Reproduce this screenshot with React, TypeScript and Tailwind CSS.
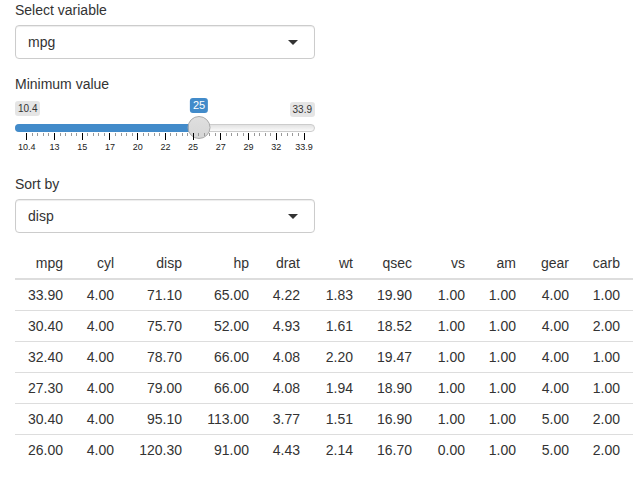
import React from 'react';

const columns = ['mpg', 'cyl', 'disp', 'hp', 'drat', 'wt', 'qsec', 'vs', 'am', 'gear', 'carb'];

const colWidths = ['w-[56px]', 'w-[51px]', 'w-[68px]', 'w-[67px]', 'w-[51px]', 'w-[53px]', 'w-[59px]', 'w-[53px]', 'w-[51px]', 'w-[53px]', 'w-[56px]'];

const rows = [
    ['33.90', '4.00', '71.10', '65.00', '4.22', '1.83', '19.90', '1.00', '1.00', '4.00', '1.00'],
    ['30.40', '4.00', '75.70', '52.00', '4.93', '1.61', '18.52', '1.00', '1.00', '4.00', '2.00'],
    ['32.40', '4.00', '78.70', '66.00', '4.08', '2.20', '19.47', '1.00', '1.00', '4.00', '1.00'],
    ['27.30', '4.00', '79.00', '66.00', '4.08', '1.94', '18.90', '1.00', '1.00', '4.00', '1.00'],
    ['30.40', '4.00', '95.10', '113.00', '3.77', '1.51', '16.90', '1.00', '1.00', '5.00', '2.00'],
    ['26.00', '4.00', '120.30', '91.00', '4.43', '2.14', '16.70', '0.00', '1.00', '5.00', '2.00'],
];

const gridLabels = ['10.4', '13', '15', '17', '20', '22', '25', '27', '29', '32', '33.9'];

// positions relative to the slider box (left edge at x=15)
const gridStart = 11.3;
const gridStep = 27.72;
const handleX = 183.5;

function SelectBox({ value }: { value: string }) {
    return (
        <div className="flex items-center justify-between h-[34px] w-[300px] border border-[#ccc] rounded-[4px] bg-white pl-[12px] pr-[16px] shadow-[inset_0_1px_1px_rgba(0,0,0,0.075)]">
            <span className="text-[14px] leading-5 text-[#333]">{value}</span>
            <span className="w-0 h-0 border-l-[5px] border-r-[5px] border-t-[5px] border-l-transparent border-r-transparent border-t-[#333]"></span>
        </div>
    )
}

function Slider() {
    const ticks = []
    for (let i = 0; i < 10; i++) {
        for (let j = 1; j < 5; j++) {
            ticks.push(gridStart + i * gridStep + (j * gridStep) / 5)
        }
    }

    return (
        <div className="flex flex-col w-[300px]">
            {/* min / max labels, value bubble above the handle */}
            <div className="relative flex justify-between items-start h-[25px] pt-[2px]">
                <span className="px-[3px] py-[1px] rounded-[3px] bg-black/10 text-[10px] leading-[13px] text-[#333]">10.4</span>
                <span className="mt-[1px] px-[3px] py-[1px] rounded-[3px] bg-black/10 text-[10px] leading-[13px] text-[#333]">33.9</span>
                <span className="absolute top-[-1px] -translate-x-1/2 px-[3px] py-[1px] rounded-[3px] bg-[#428bca] text-white text-[11px] leading-[13px]"
                    style={{ left: handleX + 0.5 }}>25</span>
            </div>

            {/* track with filled bar and handle */}
            <div className="relative h-[8px] rounded-full border border-[#ccc] bg-gradient-to-b from-[#e2e2e2] to-[#fafafa]">
                <div className="absolute -left-px -top-px h-[8px] rounded-l-full bg-[#428bca]" style={{ width: handleX + 1 }}></div>
                <div className="absolute top-[-9px] w-[23px] h-[23px] -translate-x-1/2 rounded-full border border-[#aaa] bg-gradient-to-b from-[#dfdfdf] to-[#d6d6d6]"
                    style={{ left: handleX - 1 }}></div>
            </div>

            {/* grid: ticks and labels at their scale positions */}
            <div className="relative h-[26px] mt-px">
                {ticks.map((x, i) => (
                    <span key={'m' + i} className="absolute top-0 w-px h-[3px] bg-[#999]" style={{ left: x }}></span>
                ))}
                {gridLabels.map((label, i) => (
                    <React.Fragment key={label}>
                        <span className="absolute top-0 w-px h-[7px] bg-black" style={{ left: gridStart + i * gridStep }}></span>
                        <span className="absolute top-[9px] -translate-x-1/2 text-[9px] leading-[10px] text-[#222]"
                            style={{ left: gridStart + i * gridStep + 0.5 }}>{label}</span>
                    </React.Fragment>
                ))}
            </div>
        </div>
    )
}

export default function App() {
    return (
        <div className="bg-white w-[633px] h-[485px] overflow-hidden pl-[15px] text-[#333] font-['Liberation_Sans',Arial,sans-serif]">
            <div className="flex flex-col">
                <label className="text-[14px] leading-5 mb-[5px]">Select variable</label>
                <SelectBox value="mpg" />
            </div>

            <div className="flex flex-col mt-[15px]">
                <label className="text-[14px] leading-5 mb-[5px]">Minimum value</label>
                <Slider />
            </div>

            <div className="flex flex-col mt-[15px]">
                <label className="text-[14px] leading-5 mb-[5px]">Sort by</label>
                <SelectBox value="disp" />
            </div>

            <table className="table-fixed border-collapse w-[618px] mt-[15px] text-[14px] leading-5">
                <thead>
                    <tr className="border-b-2 border-[#ddd]">
                        {columns.map((c, i) => (
                            <th key={c} className={`${colWidths[i]} font-normal text-right py-[5px] ${i === 10 ? 'pr-[13px]' : 'pr-[8px]'}`}>{c}</th>
                        ))}
                    </tr>
                </thead>
                <tbody>
                    {rows.map((row, r) => (
                        <tr key={r} className={r === 0 ? '' : 'border-t border-[#ddd]'}>
                            {row.map((v, i) => (
                                <td key={i} className={`text-right py-[5px] ${i === 10 ? 'pr-[13px]' : 'pr-[8px]'}`}>{v}</td>
                            ))}
                        </tr>
                    ))}
                </tbody>
            </table>
        </div>
    )
}
